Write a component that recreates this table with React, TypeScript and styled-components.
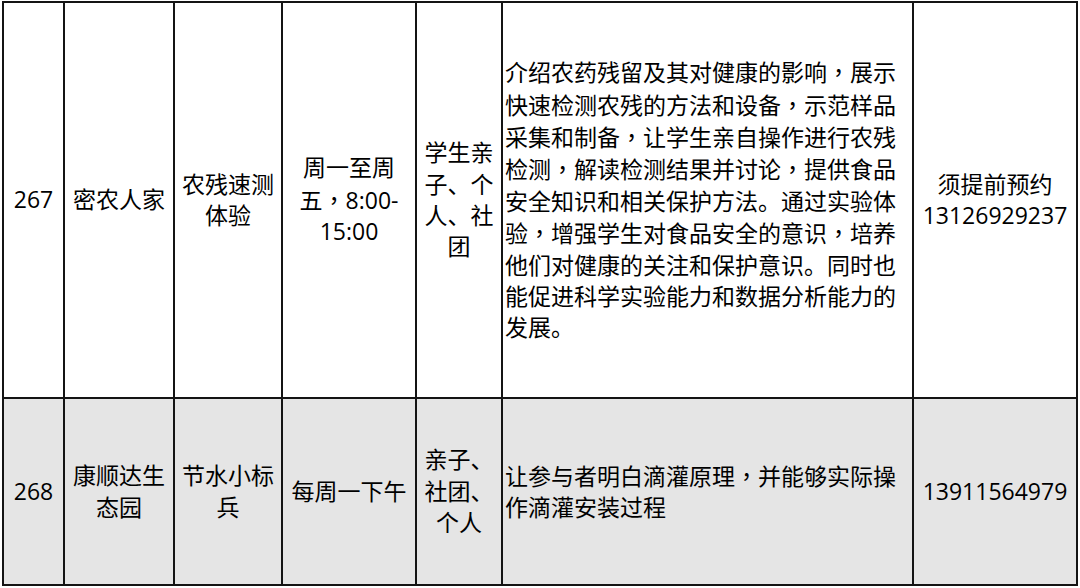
import React from "react";
import styled, { createGlobalStyle } from "styled-components";

const Global = createGlobalStyle`
  html, body { margin: 0; padding: 0; background: #ffffff; }
  body {
    font-family: "Open Sans", "Noto Sans CJK SC", sans-serif;
    color: #000;
  }
`;

const COLS = "61px 110px 108px 134px 86px 411px 164px";
const LINE = "#141414";

const Page = styled.div`
  padding: 1px 0 0 2px;
`;

const Table = styled.div`
  display: flex;
  flex-direction: column;
  width: 1074px;
  border-top: 2px solid ${LINE};
  border-left: 2px solid ${LINE};
`;

const Row = styled.div<{ $h: number; $shaded?: boolean }>`
  display: grid;
  grid-template-columns: ${COLS};
  height: ${(p) => p.$h}px;
  background: ${(p) => (p.$shaded ? "#e5e5e5" : "#ffffff")};
`;

const Cell = styled.div<{ $left?: boolean }>`
  box-sizing: border-box;
  border-right: 2px solid ${LINE};
  border-bottom: 2px solid ${LINE};
  display: flex;
  align-items: center;
  justify-content: ${(p) => (p.$left ? "flex-start" : "center")};
  text-align: ${(p) => (p.$left ? "left" : "center")};
  padding: 0 ${(p) => (p.$left ? "4px 0 2px" : "2px")};
  font-size: 23px;
  line-height: 31.4px;
  overflow: hidden;
`;

const Text = styled.div`
  white-space: nowrap;
`;

const Comma = styled.span`
  font-family: "Noto Sans CJK TC", "Noto Sans CJK SC", sans-serif;
`;

type RowData = {
  h: number;
  shaded?: boolean;
  cells: string[][];
};

const rows: RowData[] = [
  {
    h: 396,
    cells: [
      ["267"],
      ["密农人家"],
      ["农残速测", "体验"],
      ["周一至周", "五，8:00-", "15:00"],
      ["学生亲", "子、个", "人、社", "团"],
      [
        "介绍农药残留及其对健康的影响，展示",
        "快速检测农残的方法和设备，示范样品",
        "采集和制备，让学生亲自操作进行农残",
        "检测，解读检测结果并讨论，提供食品",
        "安全知识和相关保护方法。通过实验体",
        "验，增强学生对食品安全的意识，培养",
        "他们对健康的关注和保护意识。同时也",
        "能促进科学实验能力和数据分析能力的",
        "发展。",
      ],
      ["须提前预约", "13126929237"],
    ],
  },
  {
    h: 187,
    shaded: true,
    cells: [
      ["268"],
      ["康顺达生", "态园"],
      ["节水小标", "兵"],
      ["每周一下午"],
      ["亲子、", "社团、", "个人"],
      ["让参与者明白滴灌原理，并能够实际操", "作滴灌安装过程"],
      ["13911564979"],
    ],
  },
];

function Line({ text }: { text: string }) {
  const parts = text.split("，");
  return (
    <>
      {parts.map((p, i) => (
        <React.Fragment key={i}>
          {i > 0 && <Comma>，</Comma>}
          {p}
        </React.Fragment>
      ))}
    </>
  );
}

export default function App() {
  return (
    <>
      <Global />
      <Page>
        <Table>
          {rows.map((r, ri) => (
            <Row key={ri} $h={r.h} $shaded={r.shaded}>
              {r.cells.map((lines, ci) => (
                <Cell key={ci} $left={ci === 5}>
                  <Text>
                    {lines.map((l, li) => (
                      <React.Fragment key={li}>
                        {li > 0 && <br />}
                        <Line text={l} />
                      </React.Fragment>
                    ))}
                  </Text>
                </Cell>
              ))}
            </Row>
          ))}
        </Table>
      </Page>
    </>
  );
}
